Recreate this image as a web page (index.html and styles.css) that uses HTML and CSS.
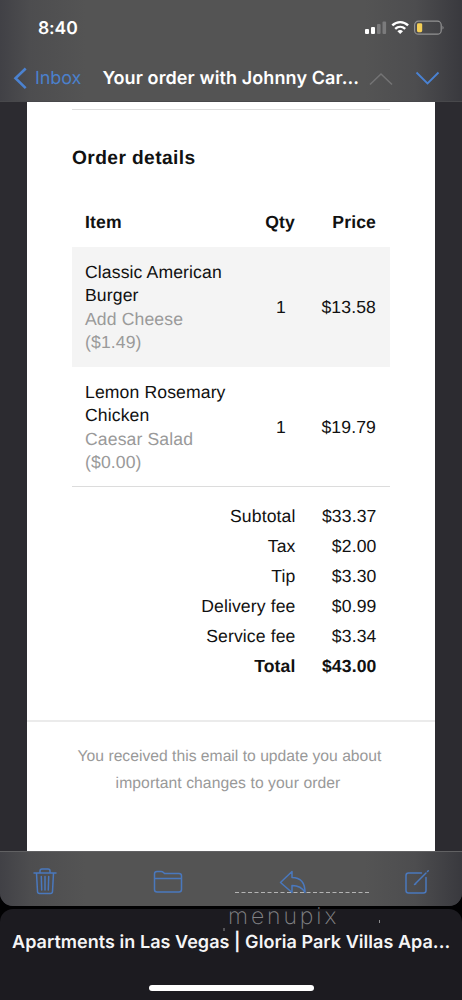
FILE: index.html
```html
<!DOCTYPE html>
<html lang="en">
<head>
<meta charset="utf-8">
<meta name="viewport" content="width=device-width">
<title>Your order with Johnny Car...</title>
<link rel="stylesheet" href="styles.css">
</head>
<body>
<div class="phone">
  <div class="sheet">
    <header class="top">
      <div class="status">
        <span class="clock">8:40</span>
        <svg class="indicators" width="80" height="16" viewBox="0 0 80 16">
          <g fill="#fff"><rect x="1" y="9" width="4" height="5" rx="1"/><rect x="7" y="7" width="4" height="7" rx="1"/></g>
          <g fill="#7b7b7c"><rect x="13" y="4" width="3.6" height="10" rx="1"/><rect x="18.5" y="1.500" width="3.600" height="12.500" rx="1"/></g>
          <g fill="none" stroke="#fff" stroke-width="2.400"><path d="M28.300 5.400c4.600-4.400 11.200-4.400 15.800 0M31.200 8.900c2.900-2.700 7.100-2.700 10 0"/></g>
          <path d="M33.400 11.200c1.700-1.500 3.900-1.500 5.600 0L36.200 14z" fill="#fff"/>
          <rect x="50.600" y="1.200" width="26.600" height="13" rx="3.800" fill="none" stroke="#929293" stroke-width="1.200"/>
          <rect x="53" y="3.200" width="5.200" height="9" rx="1.400" fill="#f5cf56"/>
          <path d="M78.500 5.800q2.200 1.900 0 3.800z" fill="#929293"/>
        </svg>
      </div>
      <nav class="nav">
        <svg class="back" width="16" height="24" viewBox="0 0 16 24"><path d="M13.700 2.500L3.500 12.300l10.200 9.800" fill="none" stroke="#4b82d0" stroke-width="2.600"/></svg>
        <span class="inbox">Inbox</span>
        <h1 class="subject">Your order with Johnny Car...</h1>
        <svg class="arrows" width="72" height="20" viewBox="0 0 72 20" fill="none" stroke-width="1.500"><path d="M2 16.500L13 6 24 16.500" stroke="#747475"/><path d="M48.500 4.500L59.500 15.500 70.500 4.500" stroke="#4a82d3" stroke-width="1.800"/></svg>
      </nav>
    </header>
    <main class="mail">
      <article class="paper">
        <section class="order">
          <h2 class="heading">Order details</h2>
          <div class="row head"><span>Item</span><span class="qty-label">Qty</span><span class="price">Price</span></div>
          <div class="row item shaded"><p>Classic American Burger<br><span class="option">Add Cheese<br>($1.49)</span></p><span class="qty">1</span><span class="price">$13.58</span></div>
          <div class="row item"><p>Lemon Rosemary Chicken<br><span class="option">Caesar Salad<br>($0.00)</span></p><span class="qty">1</span><span class="price">$19.79</span></div>
          <dl class="totals">
            <dt>Subtotal</dt><dd>$33.37</dd>
            <dt>Tax</dt><dd>$2.00</dd>
            <dt>Tip</dt><dd>$3.30</dd>
            <dt>Delivery fee</dt><dd>$0.99</dd>
            <dt>Service fee</dt><dd>$3.34</dd>
            <dt class="total">Total</dt><dd class="total">$43.00</dd>
          </dl>
        </section>
        <footer class="note">You received this email to update you about<br><span class="note-end">important changes to your order</span></footer>
      </article>
    </main>
    <div class="toolbar">
      <svg width="24" height="28" viewBox="0 0 24 28"><path d="M1 5h22M7 5V3q0-2 2-2h6q2 0 2 2v2M3.500 5l1 18.500q.1 2 2 2h11q1.900 0 2-2L20.500 5M8.300 8.500l.4 13.500M12 8.500V22M15.700 8.500L15.300 22"/></svg>
      <svg width="30" height="28" viewBox="0 0 30 28"><path d="M1.500 8V6q0-2.500 2.500-2.500h4q1.500 0 2.500 1l1 1h14.500q2.500 0 2.500 2.500v13.500q0 2.500-2.500 2.500H4q-2.500 0-2.500-2.500zM1.500 10.500h27"/></svg>
      <svg width="28" height="28" viewBox="0 0 28 28"><path d="M1.500 14.500L13 3.500v6c8.500 0 13 5 13 15-3-5.500-7-7-13-7v7z"/></svg>
      <svg width="28" height="28" viewBox="0 0 28 28"><path d="M18.500 5H5.500Q3 5 3 7.500v15Q3 25 5.500 25h15q2.500 0 2.500-2.500V9.500M12 16L23 5M24.500 3.500l.8-.8M11.500 16.500l1.300-.6"/></svg>
    </div>
  </div>
  <div class="next">
    <div class="next-title">Apartments in Las Vegas | Gloria Park Villas Apa...</div>
    <div class="home"></div>
  </div>
  <div class="watermark">
    <svg width="160" height="52" viewBox="0 0 160 52">
      <path d="M12 6.500h134" stroke="#b4b4b4" stroke-width="1" stroke-dasharray="4 2.500" fill="none"/>
      <path d="M1 42v3M156.500 34v3" stroke="#8b8b8d" stroke-width="1"/>
    </svg>
    <span class="mark">menupix</span>
  </div>
</div>
</body>
</html>
```

FILE: styles.css
```css
* { box-sizing: border-box; margin: 0; padding: 0; }
body { background: #000; }
.phone { position: relative; width: 462px; height: 1000px; overflow: hidden; background: #020203; display: flex; flex-direction: column; gap: 3px; font-family: Inter, "Liberation Sans", sans-serif; text-rendering: geometricPrecision; }
.sheet { height: 906px; display: flex; flex-direction: column; border-radius: 0 0 13px 13px; overflow: hidden; background: #2c2b30; }
.top, .toolbar { background: linear-gradient(90deg, #414146 0, #4d4d4f 30px, #545454 85px, #545454 365px, #4d4d4f 415px, #39393e 462px); }
.top { height: 102px; border-bottom: 1px solid #48484b; }
.status { height: 56px; display: flex; align-items: center; justify-content: space-between; padding: 0 18px 0 38px; color: #fff; }
.clock { font-size: 17.500px; font-weight: 600; letter-spacing: -.1px; }
.nav { height: 44px; display: flex; align-items: center; padding: 0 22px 0 12px; }
.back { flex: none; margin-right: 7px; }
.inbox { width: 68px; font-size: 18px; color: #4b80cc; letter-spacing: -.1px; }
.subject { width: 268px; font-size: 18px; font-weight: 600; letter-spacing: .1px; color: #fff; white-space: nowrap; }
.arrows { flex: none; }
.mail { height: 749px; padding: 0 27px; }
.paper { height: 749px; background: #fff; color: #111; font: 17.600px/23.300px "Liberation Sans", Arial, sans-serif; letter-spacing: .12px; padding-top: 7px; }
.order { height: 611px; margin: 0 45px; border-top: 1px solid #dedede; }
.heading { font-size: 19.200px; letter-spacing: .4px; line-height: 24px; padding-top: 37px; height: 88px; }
.row { display: grid; grid-template-columns: 154px 56px 81px; align-items: center; padding-left: 13px; }
.head { height: 49px; font-weight: 700; padding-top: 1px; }
.item { height: 120px; padding-top: 2px; border-bottom: 1px solid #dcdcdc; }
.shaded { background: #f4f4f4; border-bottom-color: #f4f4f4; }
.option { color: #9a9a9a; }
.qty-label { text-align: right; }
.qty { padding-left: 37px; }
.price { text-align: right; }
.totals { display: grid; grid-template-columns: 1fr 81px; padding: 15px 13.500px 0 0; line-height: 29.900px; text-align: right; }
.total { font-weight: 700; }
.note { border-top: 2px solid #ebebeb; padding: 21px 3px 0 0; text-align: center; font-size: 15.700px; letter-spacing: 0; line-height: 27px; color: #999; }
.note-end { letter-spacing: .08px; margin-right: 3px; }
.toolbar { height: 55px; display: flex; justify-content: space-between; padding: 16px 31px 0 33px; border-top: 1px solid #616163; fill: none; stroke: #4a78bd; stroke-width: 1.500; stroke-linejoin: round; stroke-linecap: round; }
.next { height: 91px; border-radius: 13px 13px 0 0; background: #1c1b20; display: flex; flex-direction: column; align-items: center; }
.next-title { width: 438px; height: 76px; padding-top: 22px; font-size: 18px; letter-spacing: .04px; line-height: 24px; font-weight: 600; color: #f5f5f6; white-space: nowrap; }
.home { width: 165px; height: 6px; border-radius: 3px; background: #fff; }
.watermark { position: absolute; left: 223px; top: 886px; width: 160px; height: 52px; }
.mark { position: absolute; left: 5px; top: 15px; color: #838386; font: 200 23px/30px Inter, sans-serif; letter-spacing: 2.900px; }
```
